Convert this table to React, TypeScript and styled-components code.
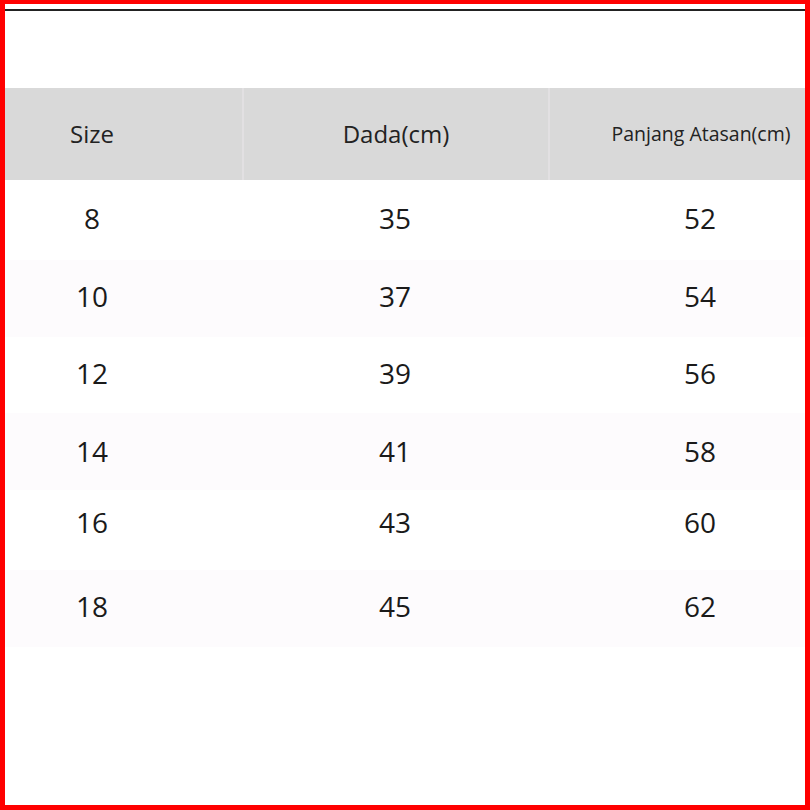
import React from "react";
import styled, { createGlobalStyle } from "styled-components";

const Global = createGlobalStyle`
  html, body { margin: 0; padding: 0; background: #ffffff; }
  body { font-family: "Open Sans", "Noto Sans", "Liberation Sans", sans-serif; color: #222222; }
`;

const Frame = styled.div`
  box-sizing: border-box;
  width: 810px;
  height: 810px;
  border-style: solid;
  border-color: #ff0000;
  border-width: 4px 5px 5px 5px;
  background: #ffffff;
  display: flex;
  flex-direction: column;
`;

const TopRule = styled.div`
  margin-top: 5px;
  height: 2px;
  background: #222222;
`;

const Table = styled.div`
  margin-top: 77px;
  display: flex;
  flex-direction: column;
`;

const Row = styled.div<{ $h: number; $bg: string }>`
  display: grid;
  grid-template-columns: 237px 306px 1fr;
  height: ${(p) => p.$h}px;
  background: ${(p) => p.$bg};
`;

const Cell = styled.div<{ $col: number; $shift?: number; $divider?: boolean }>`
  display: flex;
  align-items: center;
  justify-content: center;
  padding-right: ${(p) => (p.$col === 0 ? 63 : 0)}px;
  padding-left: ${(p) => (p.$col === 2 ? 47 : 0)}px;
  padding-bottom: ${(p) => (p.$shift ?? 0) * 2}px;
  border-left: ${(p) => (p.$divider ? "2px solid #e2e0e2" : "none")};
  box-sizing: border-box;
`;

const HeadText = styled.span<{ $small?: boolean }>`
  font-size: ${(p) => (p.$small ? 19.5 : 24)}px;
  line-height: 1;
  color: #222222;
  white-space: nowrap;
`;

const Num = styled.span`
  font-size: 28px;
  line-height: 1;
  color: #1a1a1a;
`;

const rows = [
  { v: ["8", "35", "52"], h: 80, bg: "#ffffff", s: 2 },
  { v: ["10", "37", "54"], h: 77, bg: "#fdfbfd", s: 3 },
  { v: ["12", "39", "56"], h: 76, bg: "#ffffff", s: 2 },
  { v: ["14", "41", "58"], h: 77, bg: "#fdfbfd", s: 1 },
  { v: ["16", "43", "60"], h: 80, bg: "#ffffff", s: 8 },
  { v: ["18", "45", "62"], h: 77, bg: "#fdfbfd", s: 3 },
];

export default function App() {
  return (
    <>
      <Global />
      <Frame>
        <TopRule />
        <Table>
          <Row $h={92} $bg="#d9d9d9">
            <Cell $col={0}>
              <HeadText>Size</HeadText>
            </Cell>
            <Cell $col={1} $divider>
              <HeadText>Dada(cm)</HeadText>
            </Cell>
            <Cell $col={2} $divider>
              <HeadText $small>Panjang Atasan(cm)</HeadText>
            </Cell>
          </Row>
          {rows.map((r, i) => (
            <Row key={i} $h={r.h} $bg={r.bg}>
              {r.v.map((t, c) => (
                <Cell key={c} $col={c} $shift={r.s}>
                  <Num>{t}</Num>
                </Cell>
              ))}
            </Row>
          ))}
        </Table>
      </Frame>
    </>
  );
}
